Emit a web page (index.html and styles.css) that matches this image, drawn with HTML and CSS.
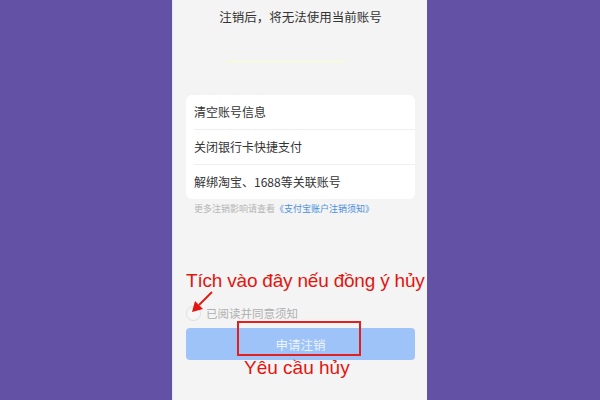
FILE: index.html
```html
<!DOCTYPE html>
<html>
<head>
  <title>注销账号</title>
  <link rel="stylesheet" href="styles.css">
</head>
<body>
  <div class="phone">
    <p class="title">注销后，将无法使用当前账号</p>
    <div class="stripe"></div>

    <div class="card">
      <div class="row">清空账号信息</div>
      <div class="row">关闭银行卡快捷支付</div>
      <div class="row">解绑淘宝、1688等关联账号</div>
    </div>
    <p class="note">更多注销影响请查看<a href="">《支付宝账户注销须知》</a></p>

    <div class="agree">
      <span class="radio"></span>
      <span>已阅读并同意须知</span>
    </div>
    <button class="btn">申请注销</button>

    <!-- annotations drawn over the screenshot -->
    <div class="tip tip-top">Tích vào đây nếu đồng ý hủy</div>
    <svg class="arrow" width="26" height="26" viewBox="0 0 26 26">
      <line x1="23" y1="2" x2="10" y2="15" stroke="#e3150f" stroke-width="1.8" />
      <polygon points="3,22 6,11 14,19" fill="#e3150f" />
    </svg>
    <div class="box"></div>
    <div class="tip tip-bottom">Yêu cầu hủy</div>
  </div>
</body>
</html>
```

FILE: styles.css
```css
html, body {
  margin: 0;
  height: 100%;
}

body {
  background-color: #6351a6;
  display: flex;
  justify-content: center;
  font-family: "Noto Sans CJK SC", "Liberation Sans", sans-serif;
  overflow: hidden;
}

.phone {
  position: relative;
  width: 255px;
  height: 400px;
  margin-left: -1px;
  background-color: #f4f4f4;
  border-left: 1px solid #e9e4f2;
  padding: 0 12px 0 13px;
  box-sizing: border-box;
}

.title {
  margin: 7px 0 0;
  text-align: center;
  font-size: 12.5px;
  line-height: 20px;
  color: #333;
}

.stripe {
  height: 3px;
  width: 120px;
  margin: 33px 0 0 40px;
  background-color: #f6f8e6;
}

.card {
  margin-top: 32px;
  background-color: white;
  border-radius: 6px;
  padding-left: 8px;
}

.row {
  height: 34px;
  line-height: 34px;
  font-size: 12px;
  color: #333;
  border-bottom: 1px solid #efefef;
}

.row:last-child {
  border-bottom: none;
}

.note {
  margin: 2px 0 0 8px;
  font-size: 9px;
  line-height: 16px;
  color: #b5b5b5;
}

.note a {
  color: #4a8fe0;
  text-decoration: none;
}

.agree {
  margin-top: 88px;
  display: flex;
  align-items: center;
  gap: 5px;
  font-size: 11.5px;
  color: #b0b0b0;
}

.radio {
  width: 13px;
  height: 13px;
  border-radius: 50%;
  border: 1px solid #dedede;
  background-color: #f7f7f7;
}

.btn {
  display: block;
  width: 100%;
  height: 32px;
  margin-top: 7px;
  border: none;
  border-radius: 4px;
  background-color: #9ec3f8;
  color: #eaf2fe;
  font-family: inherit;
  font-size: 12.5px;
}

.tip {
  position: absolute;
  color: #e3150f;
  font-family: "Liberation Sans", sans-serif;
  font-size: 19px;
  line-height: 1;
  white-space: nowrap;
}

.tip-top {
  left: 13px;
  top: 271px;
  letter-spacing: -0.2px;
}

.tip-bottom {
  left: 71px;
  top: 358px;
}

.arrow {
  position: absolute;
  left: 16px;
  top: 290px;
}

.box {
  position: absolute;
  left: 64px;
  top: 321px;
  width: 124px;
  height: 35px;
  box-sizing: border-box;
  border: 2px solid #e32020;
}
```
